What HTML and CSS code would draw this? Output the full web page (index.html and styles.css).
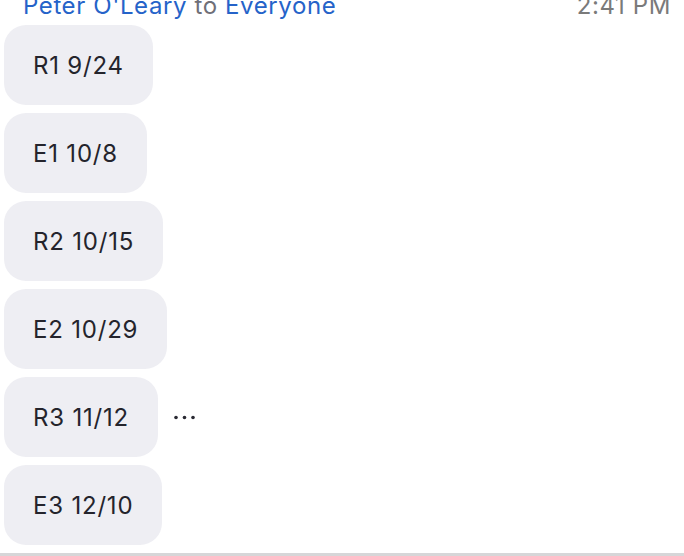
FILE: index.html
```html
<!DOCTYPE html>
<html>
<head>
<meta charset="utf-8">
<link rel="stylesheet" href="styles.css">
</head>
<body>
<div class="chat">
  <div class="header">
    <div class="who"><span class="name">Peter O'Leary</span> <span class="to">to</span> <span class="name">Everyone</span></div>
    <div class="time">2:41 PM</div>
  </div>
  <div class="messages">
    <div class="row"><div class="bubble">R1 9/24</div></div>
    <div class="row"><div class="bubble">E1 10/8</div></div>
    <div class="row"><div class="bubble">R2 10/15</div></div>
    <div class="row"><div class="bubble">E2 10/29</div></div>
    <div class="row"><div class="bubble">R3 11/12</div>
      <svg class="more" width="21" height="5" viewBox="0 0 21 5"><circle cx="2" cy="2.5" r="1.8"/><circle cx="10.5" cy="2.5" r="1.8"/><circle cx="19" cy="2.5" r="1.8"/></svg>
    </div>
    <div class="row"><div class="bubble">E3 12/10</div></div>
  </div>
  <div class="divider"></div>
</div>
</body>
</html>
```
FILE: styles.css
```css
html, body {
  margin: 0;
  padding: 0;
  background: #ffffff;
  overflow: hidden;
}
.chat {
  width: 684px;
  height: 556px;
  display: flex;
  flex-direction: column;
  font-family: Inter, "Noto Sans", sans-serif;
}
.header {
  display: flex;
  justify-content: space-between;
  align-items: baseline;
  padding: 0 13px 0 23px;
  height: 25px;
  font-size: 24px;
  line-height: 24px;
  letter-spacing: 0.6px;
}
.who, .time {
  margin-top: -6px;
}
.name {
  color: #2563c9;
}
.to {
  color: #6f6f78;
}
.time {
  color: #7a7a7a;
}
.messages {
  display: flex;
  flex-direction: column;
  gap: 8px;
  padding-left: 4px;
}
.row {
  display: flex;
  align-items: center;
  gap: 16px;
}
.bubble {
  height: 80px;
  box-sizing: border-box;
  display: flex;
  align-items: center;
  padding: 0 29px 0 29px;
  background: #eeeef3;
  border-radius: 22px;
  color: #24242c;
  font-size: 24px;
  letter-spacing: 0.8px;
}
.more {
  fill: #2a2a33;
}
.divider {
  margin-top: 8px;
  height: 3px;
  background: #d6d6d8;
}
```
